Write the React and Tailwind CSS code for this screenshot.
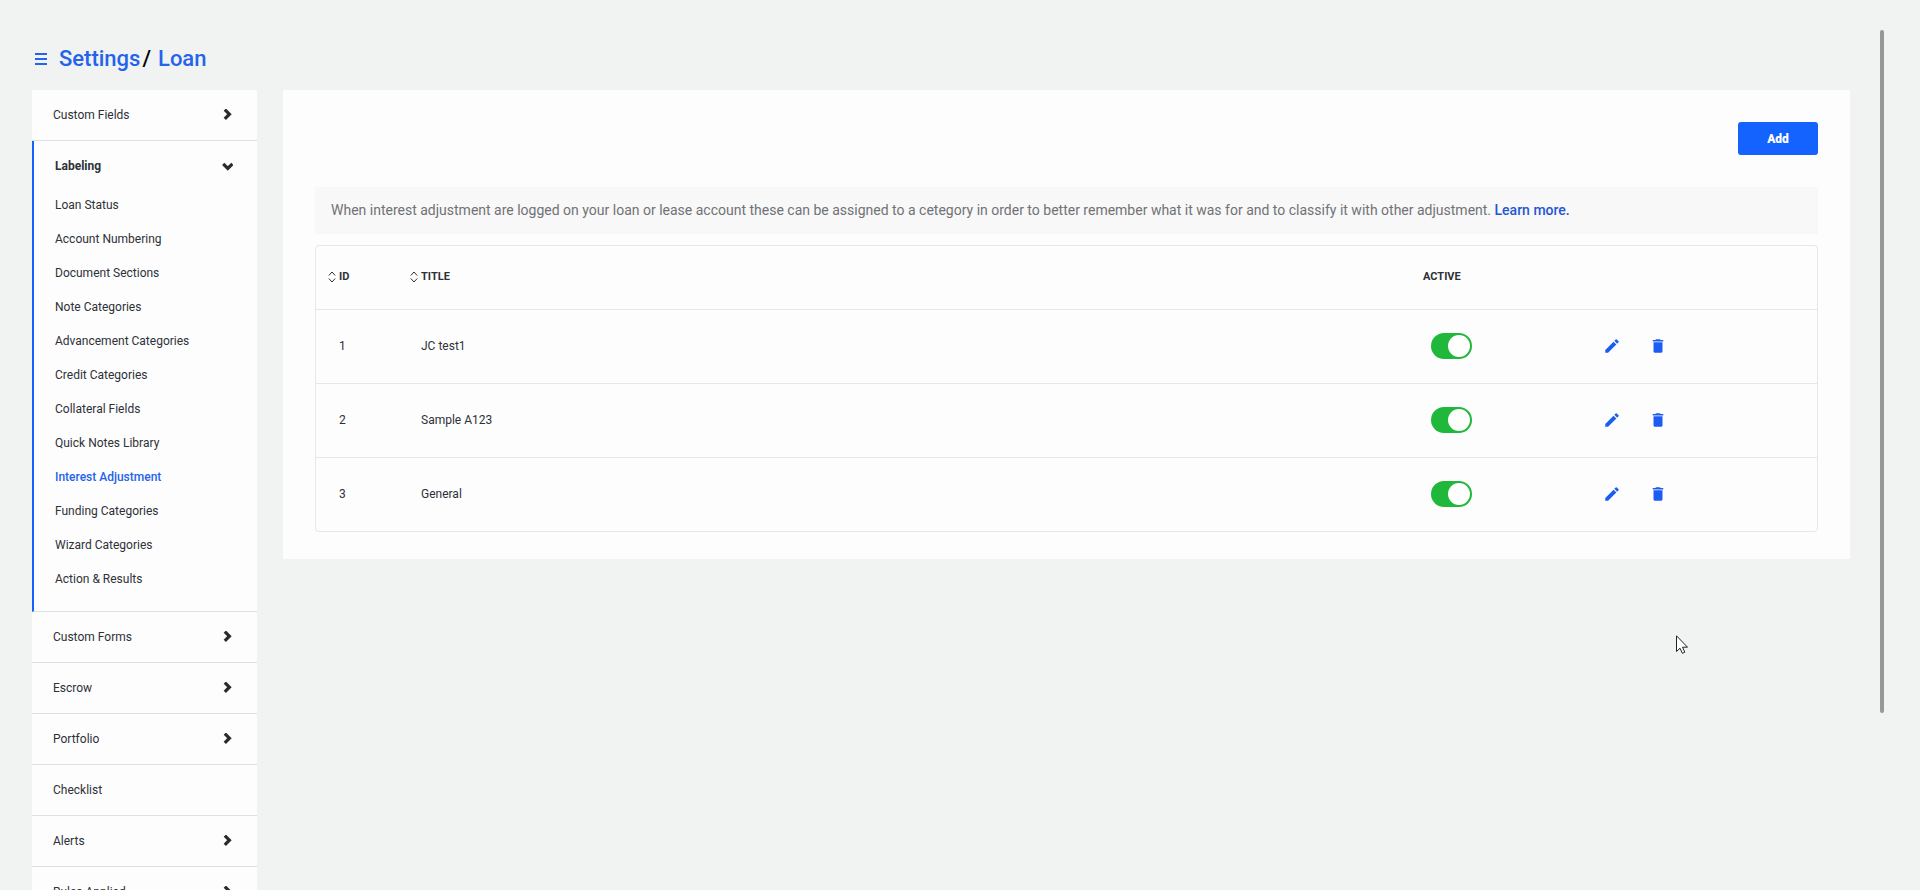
import React, { useState } from "react";
import { MdDelete, MdEdit } from "react-icons/md";

const labelingItems = [
  "Loan Status",
  "Account Numbering",
  "Document Sections",
  "Note Categories",
  "Advancement Categories",
  "Credit Categories",
  "Collateral Fields",
  "Quick Notes Library",
  "Interest Adjustment",
  "Funding Categories",
  "Wizard Categories",
  "Action & Results",
];

const sections = [
  { title: "Custom Fields", arrow: true },
  { title: "Labeling", arrow: true, items: labelingItems },
  { title: "Custom Forms", arrow: true },
  { title: "Escrow", arrow: true },
  { title: "Portfolio", arrow: true },
  { title: "Checklist", arrow: false },
  { title: "Alerts", arrow: true },
  { title: "Rules Applied", arrow: true },
];

const initialRows = [
  { id: 1, title: "JC test1", active: true },
  { id: 2, title: "Sample A123", active: true },
  { id: 3, title: "General", active: true },
];

function Chevron({ open }) {
  return (
    <svg viewBox="0 0 12 12" className={`h-3 w-3 text-[#2b2b2b] ${open ? "rotate-90" : ""}`} aria-hidden="true">
      <path d="M3.8 0.6 L8.4 5.2 L3.8 9.8" fill="none" stroke="currentColor" strokeWidth="3.2" />
    </svg>
  );
}

function SortIcon() {
  return (
    <svg viewBox="0 0 8 12" className="h-3 w-2" fill="none" stroke="currentColor" aria-hidden="true">
      <path d="M0.8 4.5 L4 1 L7.2 4.5 M0.8 7.5 L4 11 L7.2 7.5" />
    </svg>
  );
}

function Section({ section, open, onToggle, selected, onSelect }) {
  return (
    <li className={`border-b border-[#dfe0e4] ${open ? "border-l-2 border-l-[#1463ff]" : ""}`}>
      <button
        type="button"
        onClick={onToggle}
        className={`flex h-[50px] w-full items-center justify-between pr-6 pl-[21px] text-left ${open ? "font-bold" : ""}`}
      >
        {section.title}
        {section.arrow && <Chevron open={open} />}
      </button>
      {open && section.items && (
        <ul className="-mt-[3px] pb-[15px]">
          {section.items.map((item) => (
            <li key={item}>
              <a
                href="#"
                onClick={() => onSelect(item)}
                className={`flex h-[34px] items-center pl-[21px] ${item === selected ? "font-medium text-[#2563eb]" : ""}`}
              >
                {item}
              </a>
            </li>
          ))}
        </ul>
      )}
    </li>
  );
}

export default function App() {
  const [openSection, setOpenSection] = useState("Labeling");
  const [selected, setSelected] = useState("Interest Adjustment");
  const [rows, setRows] = useState(initialRows);

  const toggleActive = (id) => {
    setRows(rows.map((r) => (r.id === id ? { ...r, active: !r.active } : r)));
  };

  const removeRow = (id) => setRows(rows.filter((r) => r.id !== id));

  return (
    <div className="relative flex h-screen overflow-hidden bg-[#f1f3f2] pr-9 pl-8 font-['Roboto',sans-serif] text-xs text-[#2e3138]">
      <div className="flex min-w-0 grow flex-col pr-[30px]">
        {/* Breadcrumb */}
        <header className="flex h-[90px] shrink-0 items-center pt-7">
          <button type="button" aria-label="Menu" className="mr-[11px] ml-[3px] text-[#2563eb]">
            <svg viewBox="0 0 13 13" className="h-[13px] w-[13px]" stroke="currentColor" strokeWidth="2">
              <path d="M0 1 H12 M0 6 H12 M0 11 H12" />
            </svg>
          </button>
          <h1 className="text-[22px] leading-7 font-medium text-[#2563eb]">
            <a href="#">Settings</a>
            <span className="mr-[7px] ml-[2px] text-black">/</span>
            <a href="#">Loan</a>
          </h1>
        </header>

        <div className="flex items-start gap-[26px]">
          {/* Sidebar */}
          <nav className="w-[225px] shrink-0 bg-[#fdfdfd]">
            <ul>
              {sections.map((s) => (
                <Section
                  key={s.title}
                  section={s}
                  open={openSection === s.title}
                  onToggle={() => setOpenSection(openSection === s.title ? "" : s.title)}
                  selected={selected}
                  onSelect={setSelected}
                />
              ))}
            </ul>
          </nav>

          {/* Content */}
          <main className="min-w-0 grow bg-[#fdfdfd] px-8 pt-8 pb-[27px]">
            <div className="flex justify-end">
              <button type="button" className="h-[33px] w-20 rounded-[3px] bg-[#1463ff] font-black text-white">
                Add
              </button>
            </div>

            <p className="mt-8 flex h-[47px] items-center bg-[#f8f8f8] px-4 pb-0.5 text-sm text-[#707276]">
              <span>
                When interest adjustment are logged on your loan or lease account these can be assigned to a cetegory in
                order to better remember what it was for and to classify it with other adjustment.{" "}
                <a href="#" className="font-medium text-[#2456d6]">
                  Learn more.
                </a>
              </span>
            </p>

            <div className="mt-[11px] rounded-sm border border-[#e6e6ee]">
              <table className="w-full table-fixed text-left">
                <colgroup>
                  <col className="w-[82px]" />
                  <col />
                  <col className="w-[182px]" />
                  <col className="w-[236px]" />
                </colgroup>
                <thead>
                  <tr className="h-[63px] border-b border-[#e6e6ee] text-[11px]">
                    <th className="pl-3">
                      <button type="button" className="flex items-center gap-[3px]">
                        <SortIcon /> ID
                      </button>
                    </th>
                    <th className="pl-3">
                      <button type="button" className="flex items-center gap-[3px]">
                        <SortIcon /> TITLE
                      </button>
                    </th>
                    <th className="pl-6">ACTIVE</th>
                    <th aria-label="Actions" />
                  </tr>
                </thead>
                <tbody>
                  {rows.map((row) => (
                    <tr key={row.id} className="h-[74px] border-b border-[#e6e6ee] last:border-b-0">
                      <td className="pl-[23px]">{row.id}</td>
                      <td className="pl-[23px]">{row.title}</td>
                      <td className="pl-8">
                        <input
                          type="checkbox"
                          role="switch"
                          aria-label={`${row.title} active`}
                          checked={row.active}
                          onChange={() => toggleActive(row.id)}
                          className="flex h-[26px] w-[41px] appearance-none items-center rounded-full bg-gray-300 px-[2px] before:h-[22px] before:w-[22px] before:rounded-full before:bg-white checked:justify-end checked:bg-[#1fb83a]"
                        />
                      </td>
                      <td className="pl-[22px]">
                        <div className="flex gap-7 text-lg text-[#1d5cf2]">
                          <button type="button" aria-label={`Edit ${row.title}`}>
                            <MdEdit />
                          </button>
                          <button type="button" aria-label={`Delete ${row.title}`} onClick={() => removeRow(row.id)}>
                            <MdDelete />
                          </button>
                        </div>
                      </td>
                    </tr>
                  ))}
                </tbody>
              </table>
            </div>
          </main>
        </div>
      </div>

      {/* Scroll track */}
      <div className="w-1 shrink-0 pt-[30px]">
        <div className="h-[calc(80%-5px)] w-1 rounded-full bg-[#979797]" />
      </div>

      {/* Mouse pointer */}
      <svg viewBox="0 0 12 19" className="absolute top-[635px] left-[1676px] h-[19px] w-3" aria-hidden="true">
        <path
          d="M0.5 0.8 V16.5 L4 13.2 L6.4 18.3 L8.8 17.2 L6.5 12.2 H11.5 Z"
          fill="white"
          stroke="#222"
          strokeLinejoin="round"
        />
      </svg>
    </div>
  );
}
